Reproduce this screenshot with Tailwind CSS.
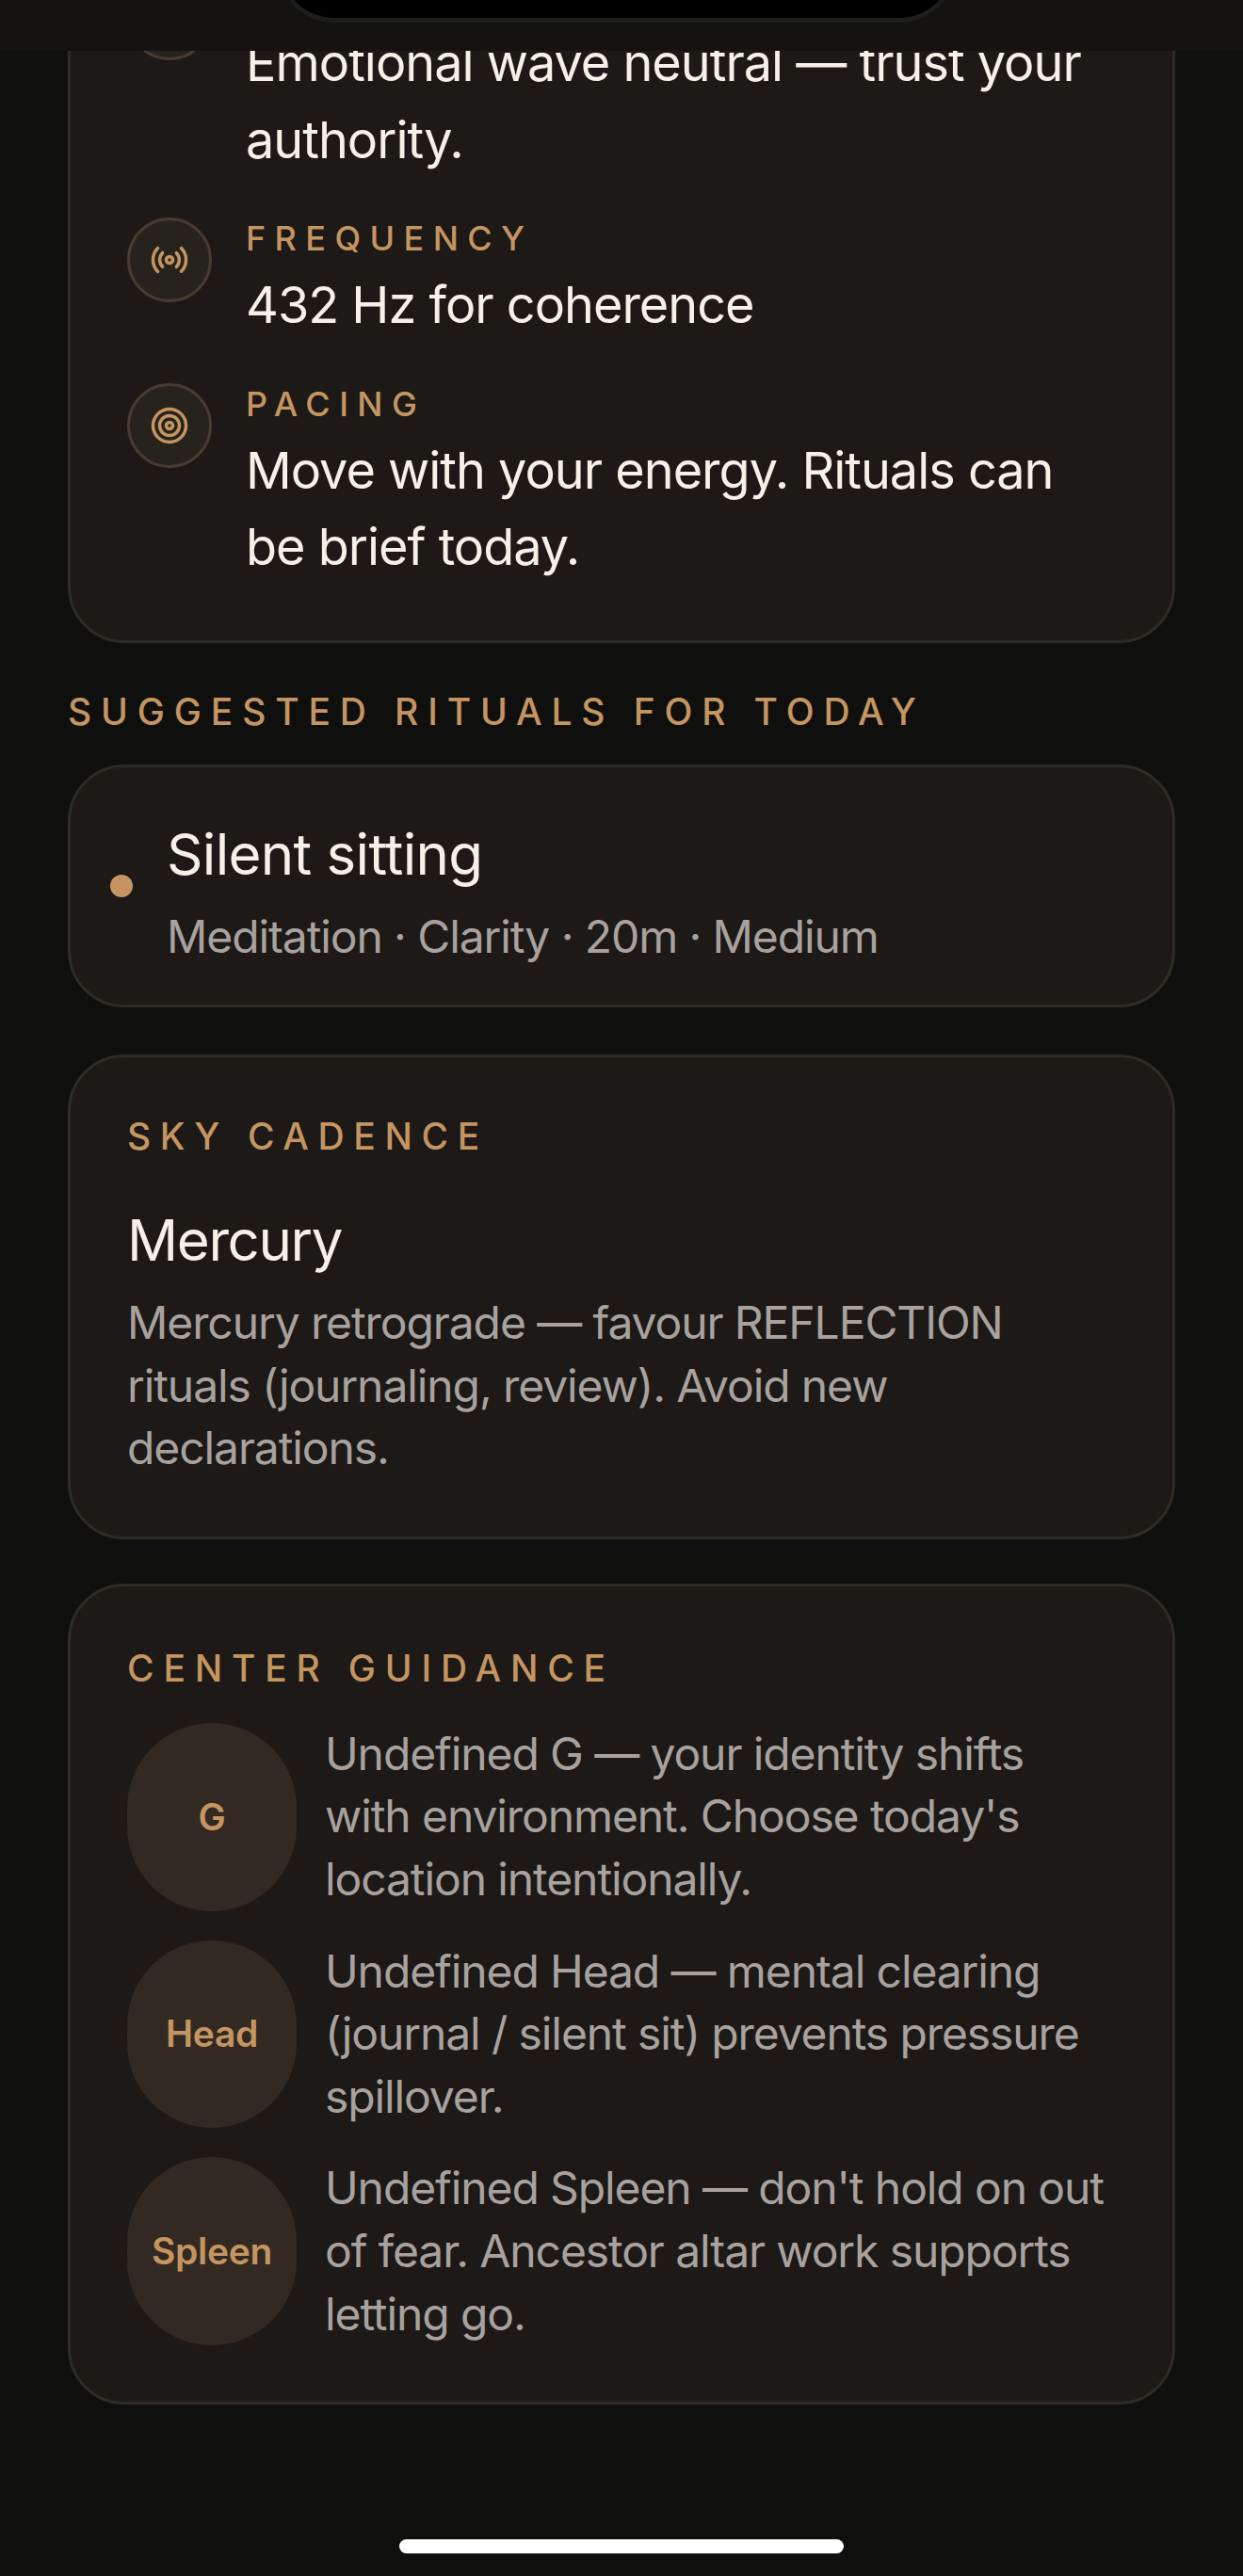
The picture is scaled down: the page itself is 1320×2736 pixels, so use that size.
<!DOCTYPE html>
<html lang="en">
<head>
    <meta charset="UTF-8">
    <meta name="viewport" content="width=device-width, initial-scale=1.0">
    <title>Today</title>
    <script src="https://cdn.jsdelivr.net/npm/@tailwindcss/browser@4"></script>
</head>
<body class="bg-[#0f0f0e] font-['Inter',sans-serif] text-[#f5f0e8]">
    <div class="relative w-[1320px] h-[2736px] overflow-hidden">
        <!-- Status bar + island -->
        <div class="absolute top-0 left-0 right-0 h-[54px] bg-[#141311] z-10">
            <div class="ml-[295px] -mt-[60px] w-[720px] h-[84px] bg-black border-x-[4px] border-b-[5px] border-[#1e1e1c] rounded-b-[60px]"></div>
        </div>

        <!-- Scrolled content -->
        <div class="px-[72px] mt-[-92px] flex flex-col">
            <!-- Today's read card -->
            <div class="bg-[#1c1917] border-[3px] border-[#2f2b25] rounded-[60px] pt-[63px] px-[60px] pb-[58px] flex flex-col gap-[42px]">
                <div class="flex gap-[36px]">
                    <div class="shrink-0 w-[90px] h-[90px] rounded-full border-[3px] border-[#483c2f] bg-[#26231d]"></div>
                    <div>
                        <div class="h-[44px] mb-[8px]"></div>
                        <div class="text-[54px] leading-[81.5px] tracking-[-1px]">Emotional wave neutral — trust your authority.</div>
                    </div>
                </div>
                <div class="flex gap-[36px]">
                    <div class="shrink-0 w-[90px] h-[90px] rounded-full border-[3px] border-[#483c2f] bg-[#26231d] flex items-center justify-center">
                        <svg width="42" height="42" viewBox="0 0 24 24" fill="none" stroke="#c49560" stroke-width="2" stroke-linecap="round" stroke-linejoin="round">
                            <path d="M4.9 19.1C1 15.2 1 8.8 4.9 4.9"/>
                            <path d="M7.8 16.2c-2.3-2.3-2.3-6.1 0-8.5"/>
                            <circle cx="12" cy="12" r="2"/>
                            <path d="M16.2 7.8c2.3 2.3 2.3 6.1 0 8.5"/>
                            <path d="M19.1 4.9C23 8.8 23 15.1 19.1 19"/>
                        </svg>
                    </div>
                    <div>
                        <div class="text-[36px] leading-[44px] mb-[8px] tracking-[9.4px] font-medium text-[#c49560]">FREQUENCY</div>
                        <div class="text-[54px] leading-[81.5px] tracking-[-1px]">432 Hz for coherence</div>
                    </div>
                </div>
                <div class="flex gap-[36px]">
                    <div class="shrink-0 w-[90px] h-[90px] rounded-full border-[3px] border-[#483c2f] bg-[#26231d] flex items-center justify-center">
                        <svg width="42" height="42" viewBox="0 0 24 24" fill="none" stroke="#c49560" stroke-width="2" stroke-linecap="round" stroke-linejoin="round">
                            <circle cx="12" cy="12" r="10"/>
                            <circle cx="12" cy="12" r="6"/>
                            <circle cx="12" cy="12" r="2"/>
                        </svg>
                    </div>
                    <div>
                        <div class="text-[36px] leading-[44px] mb-[8px] tracking-[9.4px] font-medium text-[#c49560]">PACING</div>
                        <div class="text-[54px] leading-[81.5px] tracking-[-1px]">Move with your energy. Rituals can be brief today.</div>
                    </div>
                </div>
            </div>

            <div class="mt-[46px] mb-[29px] text-[39px] leading-[54px] tracking-[9.85px] font-medium text-[#c49560]">SUGGESTED RITUALS FOR TODAY</div>

            <!-- Ritual -->
            <div class="bg-[#1c1917] border-[3px] border-[#2f2b25] rounded-[60px] py-[39px] px-[42px] flex items-center gap-[36px]">
                <div class="shrink-0 w-[24px] h-[24px] rounded-full bg-[#c49560]"></div>
                <div class="pt-[8px]">
                    <div class="text-[60px] leading-[90px] mb-[10px] tracking-[-0.7px]">Silent sitting</div>
                    <div class="text-[48px] leading-[66.6px] tracking-[-1.1px] text-[#a8a29e]">Meditation · Clarity · 20m · Medium</div>
                </div>
            </div>

            <!-- Sky cadence -->
            <div class="mt-[50px] bg-[#1c1917] border-[3px] border-[#2f2b25] rounded-[60px] pt-[57px] px-[60px] pb-[60px]">
                <div class="text-[39px] leading-[54px] tracking-[9.6px] font-medium text-[#c49560]">SKY CADENCE</div>
                <div class="mt-[38px] text-[60px] leading-[90px] tracking-[-1.4px]">Mercury</div>
                <div class="mt-[10px] text-[48px] leading-[66.6px] tracking-[-1.1px] text-[#a8a29e]">Mercury retrograde — favour REFLECTION rituals (journaling, review). Avoid new declarations.</div>
            </div>

            <!-- Center guidance -->
            <div class="mt-[47px] bg-[#1c1917] border-[3px] border-[#2f2b25] rounded-[60px] p-[60px]">
                <div class="text-[39px] leading-[54px] tracking-[9.8px] font-medium text-[#c49560]">CENTER GUIDANCE</div>
                <div class="mt-[31px] flex flex-col gap-[31px]">
                    <div class="flex gap-[30px]">
                        <div class="shrink-0 w-[180px] rounded-full bg-[#322a22] flex items-center justify-center text-[39px] tracking-[-0.3px] font-semibold text-[#c49560]">G</div>
                        <div class="text-[48px] leading-[66.6px] tracking-[-1.1px] text-[#a8a29e]">Undefined G — your identity shifts with environment. Choose today's location intentionally.</div>
                    </div>
                    <div class="flex gap-[30px]">
                        <div class="shrink-0 w-[180px] rounded-full bg-[#322a22] flex items-center justify-center text-[39px] tracking-[-0.3px] font-semibold text-[#c49560]">Head</div>
                        <div class="text-[48px] leading-[66.6px] tracking-[-1.1px] text-[#a8a29e]">Undefined Head — mental clearing (journal / silent sit) prevents pressure spillover.</div>
                    </div>
                    <div class="flex gap-[30px]">
                        <div class="shrink-0 w-[180px] rounded-full bg-[#322a22] flex items-center justify-center text-[39px] tracking-[-0.3px] font-semibold text-[#c49560]">Spleen</div>
                        <div class="text-[48px] leading-[66.6px] tracking-[-1.1px] text-[#a8a29e]">Undefined Spleen — don't hold on out of fear. Ancestor altar work supports letting go.</div>
                    </div>
                </div>
            </div>
        </div>

        <!-- Home indicator -->
        <div class="absolute left-[424px] bottom-[24px] w-[472px] h-[15px] rounded-full bg-white"></div>
    </div>
</body>
</html>
